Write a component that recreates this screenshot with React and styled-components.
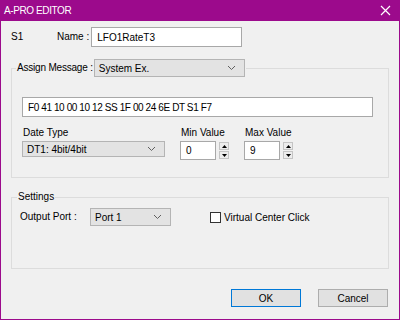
import React from "react";
import styled, { createGlobalStyle } from "styled-components";

const GlobalStyle = createGlobalStyle`
  html, body {
    margin: 0;
    padding: 0;
    background: #ffffff;
  }
  * {
    box-sizing: border-box;
  }
`;

const Chevron = () => (
  <svg width="9" height="6" viewBox="0 0 9 6">
    <path d="M1 1 L4.5 4.5 L8 1" fill="none" stroke="#606060" strokeWidth="1" />
  </svg>
);

function Combo({ value, width, height }) {
  return (
    <ComboBox $width={width} $height={height}>
      <span>{value}</span>
      <Chevron />
    </ComboBox>
  );
}

function Spinner({ value }) {
  return (
    <SpinGroup>
      <TextBox $width={36} $height={19}>{value}</TextBox>
      <SpinButtons>
        <SpinButton>
          <svg width="5" height="3" viewBox="0 0 5 3"><path d="M2.5 0 L5 3 L0 3 Z" fill="#000" /></svg>
        </SpinButton>
        <SpinButton>
          <svg width="5" height="3" viewBox="0 0 5 3"><path d="M0 0 L5 0 L2.5 3 Z" fill="#000" /></svg>
        </SpinButton>
      </SpinButtons>
    </SpinGroup>
  );
}

export default function App() {
  return (
    <>
      <GlobalStyle />
      <Window>
        <TitleBar>
          <Title>A-PRO EDITOR</Title>
          <CloseIcon width="11" height="11" viewBox="0 0 11 11">
            <path d="M1 1 L10 10 M10 1 L1 10" stroke="#fff" strokeWidth="1.2" />
          </CloseIcon>
        </TitleBar>
        <Body>
          <NameRow>
            <Label>S1</Label>
            <NameLabel>Name :</NameLabel>
            <TextBox $width={151} $height={20}>LFO1RateT3</TextBox>
          </NameRow>

          <Group $pad="20px 15px 17px 10px">
            <GroupLegend $shift={-6}>
              <LegendLabel>Assign Message :</LegendLabel>
              <Combo value="System Ex." width={151} height={18} />
            </GroupLegend>
            <TextBox $width={351} $height={20} $spacing={-0.4}>
              F0 41 10 00 10 12 SS 1F 00 24 6E DT S1 F7
            </TextBox>
            <FieldRow>
              <Field>
                <FieldLabel>Date Type</FieldLabel>
                <Combo value="DT1: 4bit/4bit" width={143} height={16} />
              </Field>
              <Field>
                <FieldLabel>Min Value</FieldLabel>
                <Spinner value="0" />
              </Field>
              <Field>
                <FieldLabel>Max Value</FieldLabel>
                <Spinner value="9" />
              </Field>
            </FieldRow>
          </Group>

          <Group $pad="4px 15px 42px 8px">
            <GroupLegend $shift={-3}>
              <Label>Settings</Label>
            </GroupLegend>
            <SettingsRow>
              <PortLabel>Output Port :</PortLabel>
              <Combo value="Port 1" width={81} height={18} />
              <CheckLabel>
                <CheckBox />
                Virtual Center Click
              </CheckLabel>
            </SettingsRow>
          </Group>

          <ButtonRow>
            <Button $primary>OK</Button>
            <Button>Cancel</Button>
          </ButtonRow>
        </Body>
      </Window>
    </>
  );
}

const Window = styled.div`
  width: 400px;
  height: 320px;
  display: flex;
  flex-direction: column;
  background: #f0f0f0;
  border: 1px solid #9c0a8c;
  border-top: none;
  font-family: "Liberation Sans", Arial, sans-serif;
  font-size: 10px;
  color: #000;
`;

const TitleBar = styled.div`
  height: 21px;
  margin: 0 -1px;
  padding: 0 9px 0 4px;
  display: flex;
  align-items: center;
  justify-content: space-between;
  background: #9c0a8c;
`;

const Title = styled.span`
  color: #fff;
  font-size: 10px;
  letter-spacing: -0.4px;
`;

const CloseIcon = styled.svg`
  display: block;
`;

const Body = styled.div`
  flex: 1;
  padding: 6px 10px 0 10px;
  display: flex;
  flex-direction: column;
`;

const Label = styled.span`
  white-space: nowrap;
  line-height: 14px;
`;

const LegendLabel = styled(Label)`
  letter-spacing: -0.2px;
`;

const NameRow = styled.div`
  display: flex;
  align-items: center;
  height: 20px;
`;

const NameLabel = styled(Label)`
  width: 68px;
  padding-right: 2px;
  text-align: right;
  flex-shrink: 0;
`;

const TextBox = styled.div`
  width: ${(p) => p.$width}px;
  height: ${(p) => p.$height}px;
  flex-shrink: 0;
  display: flex;
  align-items: center;
  padding: 0 5px;
  background: #fff;
  border: 1px solid #a8a8a8;
  white-space: nowrap;
  letter-spacing: ${(p) => p.$spacing || 0}px;
`;

const ComboBox = styled.div`
  width: ${(p) => p.$width}px;
  height: ${(p) => p.$height}px;
  flex-shrink: 0;
  display: flex;
  align-items: center;
  justify-content: space-between;
  padding: 0 8px 0 4px;
  background: #e3e3e3;
  border: 1px solid #b4b4b4;
  white-space: nowrap;
`;

const Group = styled.fieldset`
  margin: 12px 0 0 0;
  padding: ${(p) => p.$pad};
  border: 1px solid #dcdcdc;
  min-width: 0;
`;

const GroupLegend = styled.legend`
  display: flex;
  align-items: center;
  gap: 1px;
  padding: 0 1px;
  margin-left: ${(p) => p.$shift}px;
`;

const FieldRow = styled.div`
  display: flex;
  gap: 15px;
  margin-top: 9px;
`;

const Field = styled.div`
  display: flex;
  flex-direction: column;
  gap: 1px;
`;

const FieldLabel = styled(Label)`
  padding-left: 1px;
`;

const SpinGroup = styled.div`
  display: flex;
  gap: 3px;
`;

const SpinButtons = styled.div`
  display: flex;
  flex-direction: column;
  justify-content: space-between;
  height: 17px;
  margin-top: 1px;
`;

const SpinButton = styled.div`
  width: 10px;
  height: 8px;
  display: flex;
  align-items: center;
  justify-content: center;
  background: #ececec;
  border: 1px solid #c4c4c4;
`;

const SettingsRow = styled.div`
  display: flex;
  align-items: center;
  height: 18px;
`;

const PortLabel = styled(Label)`
  width: 70px;
  flex-shrink: 0;
`;

const CheckLabel = styled.label`
  display: flex;
  align-items: center;
  gap: 3px;
  margin-left: 39px;
  white-space: nowrap;
`;

const CheckBox = styled.span`
  width: 11px;
  height: 11px;
  background: #fff;
  border: 1px solid #333;
`;

const ButtonRow = styled.div`
  display: flex;
  justify-content: flex-end;
  gap: 17px;
  margin-top: 20px;
  padding-right: 1px;
`;

const Button = styled.div`
  width: 70px;
  height: 18px;
  display: flex;
  align-items: center;
  justify-content: center;
  background: #e1e1e1;
  border: 1px solid ${(p) => (p.$primary ? "#0078d7" : "#adadad")};
`;
